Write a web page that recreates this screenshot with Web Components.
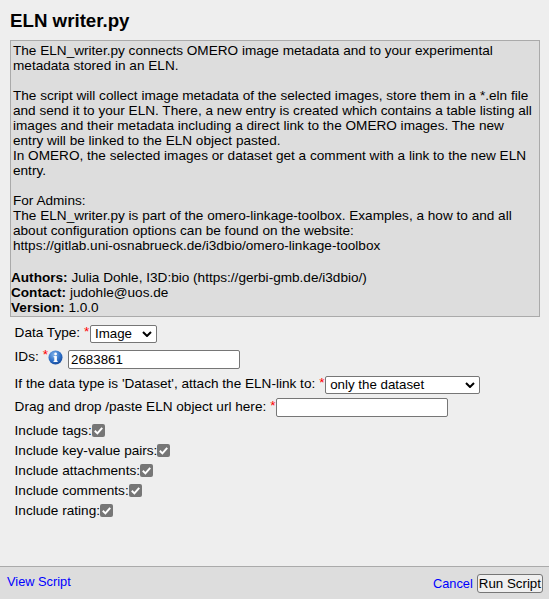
<!DOCTYPE html>
<html lang="en"><head><meta charset="utf-8"><title>ELN writer.py</title>
<style>
html,body{margin:0;height:100%;background:#eee;font-family:"Liberation Sans",Arial,sans-serif;font-size:13.6px;color:#000}
</style></head><body>
<script-dialog>
  <span slot="title">ELN writer.py</span>
  <script-desc slot="desc">The ELN_writer.py connects OMERO image metadata and to your experimental<br>metadata stored in an ELN.<br><br>The script will collect image metadata of the selected images, store them in a *.eln file<br>and send it to your ELN. There, a new entry is created which contains a table listing all<br>images and their metadata including a direct link to the OMERO images. The new<br>entry will be linked to the ELN object pasted.<br>In OMERO, the selected images or dataset get a comment with a link to the new ELN<br>entry.<br><br>For Admins:<br>The ELN_writer.py is part of the omero-linkage-toolbox. Examples, a how to and all<br>about configuration options can be found on the website:<br>https://gitlab.uni-osnabrueck.de/i3dbio/omero-linkage-toolbox<br></script-desc>
  <form-row req style="--h:23px;--up:2px"><span>Data Type:</span><fake-select style="--w:67px" value="Image"></fake-select></form-row>
  <form-row req info style="--h:28px;--up:6px"><span>IDs:</span><text-field style="--w:172px" value="2683861"></text-field></form-row>
  <form-row req style="--h:23px;--up:2px"><span>If the data type is 'Dataset', attach the ELN-link to:</span><fake-select style="--w:155px" value="only the dataset"></fake-select></form-row>
  <form-row req style="--h:23px;--up:2px;margin-bottom:1px"><span>Drag and drop /paste ELN object url here:</span><text-field style="--w:172px"></text-field></form-row>
  <form-row><span>Include tags:</span><check-box></check-box></form-row>
  <form-row><span>Include key-value pairs:</span><check-box></check-box></form-row>
  <form-row><span>Include attachments:</span><check-box></check-box></form-row>
  <form-row><span>Include comments:</span><check-box></check-box></form-row>
  <form-row><span>Include rating:</span><check-box></check-box></form-row>
  <script-footer slot="footer"></script-footer>
</script-dialog>
<script>
function def(name, css, html){
  customElements.define(name, class extends HTMLElement{
    connectedCallback(){
      if(this.shadowRoot) return;
      const r=this.attachShadow({mode:'open'});
      r.innerHTML='<style>'+css+'</style>'+(typeof html==='function'?html(this):html);
    }
  });
}
def('script-dialog',
 `:host{display:flex;flex-direction:column;height:599px;box-sizing:border-box}
  .main{flex:1;padding:0 9px 0 10px}
  h1{margin:0;padding-top:10px;height:40px;box-sizing:border-box;font-size:18.72px;line-height:21px;font-weight:bold}
  .form{padding:5px 0 0 4.6px}`,
 `<div class="main"><h1><slot name="title"></slot></h1><slot name="desc"></slot><div class="form"><slot></slot></div></div><slot name="footer"></slot>`);
def('script-desc',
 `:host{display:block;box-sizing:border-box;height:277px;border:1px solid #aaa;background:#ddd;padding:2px 1px 0 2px;line-height:15px}
  .meta{display:block;margin-left:-2px;padding-top:17px}b{font-weight:bold}`,
 `<slot></slot><span class="meta"><b>Authors:</b> Julia Dohle, I3D:bio (https://gerbi-gmb.de/i3dbio/)<br><b>Contact:</b> judohle@uos.de<br><b>Version:</b> 1.0.0</span>`);
def('form-row',
 `:host{display:flex;align-items:center;height:var(--h,20px);white-space:nowrap}
  ::slotted(span:first-child){margin-bottom:var(--up,0px)}`,
 `<slot></slot>`);
def('fake-select',
 `:host{display:inline-flex;align-items:center;justify-content:space-between;box-sizing:border-box;width:var(--w);height:18px;background:#fff;border:1px solid #767676;border-radius:2px;padding:0 4px;font-size:13.333px}
  svg{display:block}`,
 h=>`<span>${h.getAttribute('value')}</span><svg width="10" height="6" viewBox="0 0 10 6"><path d="M1 1l4 4 4-4" fill="none" stroke="#000" stroke-width="2"/></svg>`);
def('text-field',
 `:host{display:inline-flex;align-items:center;box-sizing:border-box;width:var(--w);height:19px;background:#fff;border:1px solid #767676;border-radius:2px;padding:0 2px;font-size:13.333px}`,
 h=>`<span>${h.getAttribute('value')||''}</span>`);
def('check-box',
 `:host{display:inline-block;width:13px;height:13px;background:#767676;border-radius:2px}
  svg{display:block}`,
 `<svg width="13" height="13" viewBox="0 0 13 13"><path d="M2.8 6.8l2.6 2.6 4.8-5.6" fill="none" stroke="#fff" stroke-width="2"/></svg>`);
def('script-footer',
 `:host{display:flex;align-items:flex-start;justify-content:space-between;box-sizing:border-box;height:33px;border-top:1px solid #aaa;background:#ddd;padding:7px 6px 0 7px;font-size:12.8px}
  a{color:#00f;text-decoration:none}
  .right{display:flex;align-items:center;gap:4px}
  button{font:13.333px "Liberation Sans",Arial,sans-serif;height:19px;padding:0 1px;border:1px solid #767676;border-radius:3px;background:#efefef;color:#000;margin:0}`,
 `<a href="#">View Script</a><div class="right"><a href="#">Cancel</a><button>Run Script</button></div>`);
document.querySelectorAll('form-row[req]').forEach(row=>{
  const label=row.children[0];
  const s=document.createElement('span');
  s.textContent='*'; s.style.cssText='color:#f00;margin-left:4px;margin-right:.6px;align-self:flex-start;line-height:20px';
  label.after(s);
  if(row.hasAttribute('info')){
    const wrap=document.createElement('span');
    wrap.style.cssText='display:inline-flex;margin:5px 5.4px 0 -1px;align-self:flex-start';
    wrap.innerHTML='<svg width="15" height="15" viewBox="0 0 15 15"><defs><radialGradient id="g" cx=".4" cy=".3" r=".8"><stop offset="0" stop-color="#7fb2ea"/><stop offset=".6" stop-color="#2a6cc4"/><stop offset="1" stop-color="#123f8c"/></radialGradient></defs><circle cx="7.5" cy="7.5" r="7" fill="url(#g)"/><rect x="6.3" y="6.2" width="2.6" height="5.6" fill="#fff"/><rect x="5.5" y="6.2" width="3" height="1" fill="#fff"/><rect x="5.5" y="10.9" width="4.2" height="1" fill="#fff"/><circle cx="7.6" cy="4" r="1.4" fill="#fff"/></svg>';
    s.after(wrap);
  }
});
</script>
</body></html>
